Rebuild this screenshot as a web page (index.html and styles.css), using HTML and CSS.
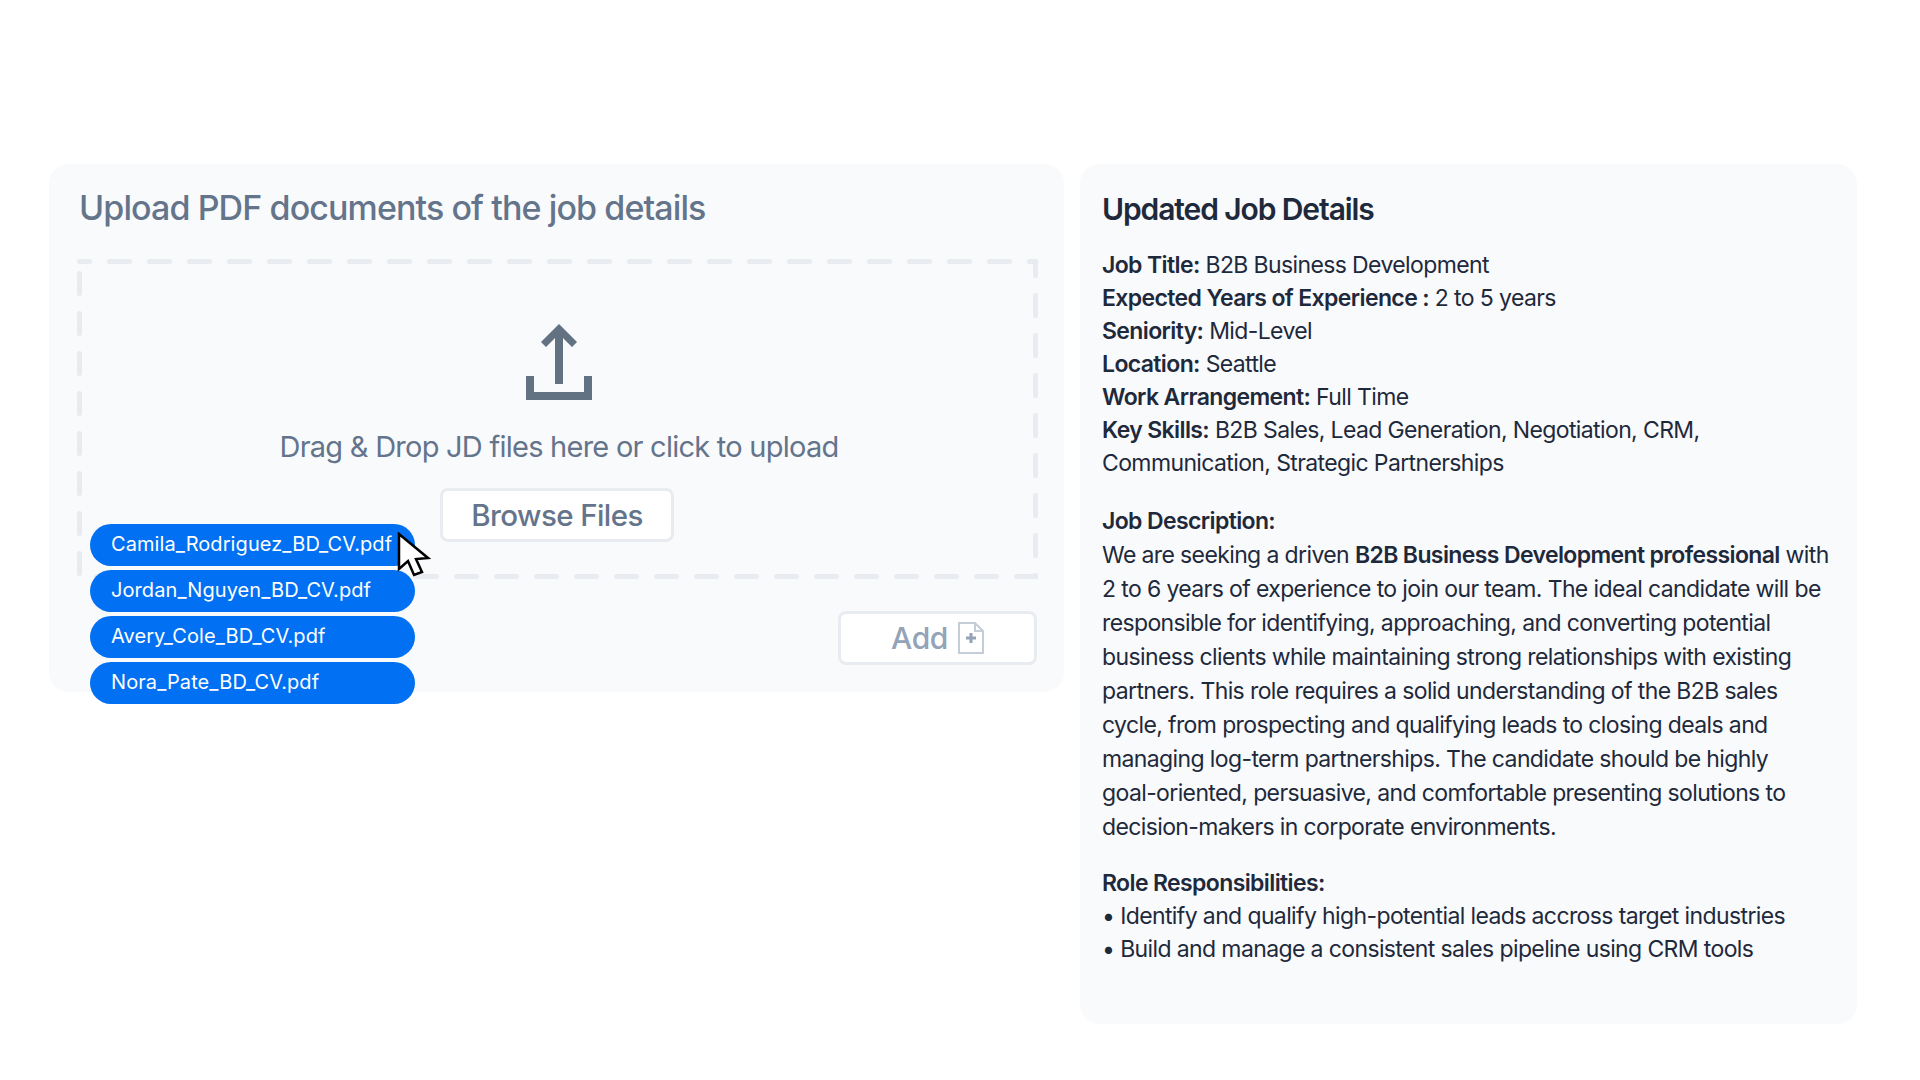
FILE: index.html
```html
<!DOCTYPE html>
<html lang="en">
<head>
    <meta charset="UTF-8">
    <title>Upload job details</title>
    <link rel="stylesheet" href="styles.css">
</head>
<body>
    <main class="layout">
        <section class="upload-panel">
            <h2 class="upload-title">Upload PDF documents of the job details</h2>

            <div class="dropzone">
                <svg class="dropzone-border" width="100%" height="100%">
                    <rect x="2.5" y="2.5" width="956" height="315" />
                </svg>
                <svg class="upload-icon" width="66" height="76" viewBox="0 0 66 76">
                    <path d="M33 0 L51 18 L46 23 L37 14 V60 H29 V14 L20 23 L15 18 Z" />
                    <path d="M0 52 H8 V68 H58 V52 H66 V76 H0 Z" />
                </svg>
                <p class="drop-text">Drag &amp; Drop JD files here or click to upload</p>
                <button class="btn btn-browse">Browse Files</button>
            </div>

            <div class="add-row">
                <button class="btn btn-add">
                    Add
                    <svg width="26" height="32" viewBox="0 0 26 32">
                        <path class="file-outline" d="M1 1 H17 L25 9 V31 H1 Z M17 1 V9 H25" />
                        <path class="file-plus" d="M13 11 V21 M8 16 H18" />
                    </svg>
                </button>
            </div>

            <ul class="file-list">
                <li class="file-chip">Camila_Rodriguez_BD_CV.pdf</li>
                <li class="file-chip">Jordan_Nguyen_BD_CV.pdf</li>
                <li class="file-chip">Avery_Cole_BD_CV.pdf</li>
                <li class="file-chip">Nora_Pate_BD_CV.pdf</li>
            </ul>

            <svg class="cursor" width="34" height="46" viewBox="0 0 34 46">
                <path d="M2 2 V37 L11 29 L17 43 L25 40 L19 27 L31 26 Z" />
            </svg>
        </section>

        <section class="details-panel">
            <h2 class="details-title">Updated Job Details</h2>

            <div class="details-block summary">
                <div><b>Job Title:</b> B2B Business Development</div>
                <div><b>Expected Years of Experience :</b> 2 to 5 years</div>
                <div><b>Seniority:</b> Mid-Level</div>
                <div><b>Location:</b> Seattle</div>
                <div><b>Work Arrangement:</b> Full Time</div>
                <div><b>Key Skills:</b> B2B Sales, Lead Generation, Negotiation, CRM,<br>Communication, Strategic Partnerships</div>
            </div>

            <div class="details-block description">
                <div class="block-label"><b>Job Description:</b></div>
                We are seeking a driven <b>B2B Business Development professional</b> with<br>
                2 to 6 years of experience to join our team. The ideal candidate will be<br>
                responsible for identifying, approaching, and converting potential<br>
                business clients while maintaining strong relationships with existing<br>
                partners. This role requires a solid understanding of the B2B sales<br>
                cycle, from prospecting and qualifying leads to closing deals and<br>
                managing log-term partnerships. The candidate should be highly<br>
                goal-oriented, persuasive, and comfortable presenting solutions to<br>
                decision-makers in corporate environments.
            </div>

            <div class="details-block">
                <div><b>Role Responsibilities:</b></div>
                <div>• Identify and qualify high-potential leads accross target industries</div>
                <div>• Build and manage a consistent sales pipeline using CRM tools</div>
            </div>
        </section>
    </main>
</body>
</html>
```

FILE: styles.css
```css
:root {
    --panel-bg: #f9fafc;
    --slate: #64748b;
    --slate-light: #94a3b8;
    --ink: #1e293b;
    --line: #e8ebef;
    --chip: #0170f3;
}

* { box-sizing: border-box; }

body {
    margin: 0;
    background: #fff;
    font-family: 'Inter', 'Open Sans', sans-serif;
    overflow: hidden;
}

.layout {
    display: flex;
    align-items: flex-start;
    gap: 16px;
    padding: 164px 0 0 49px;
}

/* left panel */
.upload-panel {
    position: relative;
    width: 1015px;
    height: 528px;
    padding: 22px 28px 0;
    background: var(--panel-bg);
    border-radius: 20px;
}

.upload-title {
    margin: 0 0 29px 2px;
    font-size: 34px;
    line-height: 44px;
    font-weight: 500;
    letter-spacing: -0.9px;
    color: var(--slate);
}

.dropzone {
    position: relative;
    width: 961px;
    height: 320px;
    padding-top: 65px;
    display: flex;
    flex-direction: column;
    align-items: center;
}

.dropzone-border {
    position: absolute;
    top: 0;
    left: 0;
}

.dropzone-border rect {
    fill: none;
    stroke: var(--line);
    stroke-width: 5;
    stroke-dasharray: 20 20;
    stroke-dashoffset: 10;
    stroke-linecap: round;
}

.upload-icon { fill: #637282; margin-left: 3px; }

.drop-text {
    margin: 27px 0 0 3px;
    font-size: 29px;
    line-height: 40px;
    letter-spacing: -0.75px;
    color: var(--slate);
}

.btn {
    background: #fff;
    border: 3px solid var(--line);
    border-radius: 8px;
    font-family: inherit;
    font-size: 30px;
    font-weight: 500;
    letter-spacing: -0.4px;
}

.btn-browse {
    width: 234px;
    height: 54px;
    margin: 21px 0 0 -1px;
    color: var(--slate);
    font-size: 29.5px;
    letter-spacing: -0.6px;
}

.add-row {
    display: flex;
    justify-content: flex-end;
    width: 960px;
    margin-top: 32px;
}

.btn-add {
    width: 199px;
    height: 54px;
    display: flex;
    align-items: center;
    justify-content: center;
    gap: 10px;
    color: var(--slate-light);
}

.file-outline { fill: none; stroke: #c5cdd8; stroke-width: 2; }
.file-plus { fill: none; stroke: var(--slate-light); stroke-width: 3; }

/* uploaded files sit over the dropzone */
.file-list {
    position: absolute;
    top: 360px;
    left: 41px;
    width: 325px;
    margin: 0;
    padding: 0;
    list-style: none;
    display: flex;
    flex-direction: column;
    gap: 4px;
}

.file-chip {
    height: 42px;
    padding-left: 21px;
    border-radius: 21px;
    background: var(--chip);
    color: #fff;
    font-size: 20px;
    line-height: 41px;
    letter-spacing: 0.08px;
}

.cursor {
    position: absolute;
    top: 368px;
    left: 348px;
}

.cursor path {
    fill: #fff;
    stroke: #000;
    stroke-width: 2.5;
}

/* right panel */
.details-panel {
    width: 777px;
    height: 860px;
    padding: 23px 22px 0;
    background: var(--panel-bg);
    border-radius: 20px;
    color: var(--ink);
    font-size: 23px;
    line-height: 33px;
    letter-spacing: -0.62px;
}

.details-title {
    margin: 0 0 18px;
    font-size: 30px;
    line-height: 44px;
    font-weight: 600;
    letter-spacing: -1.1px;
}

.details-block { margin-bottom: 24px; }
.details-block b { font-weight: 600; }

.summary { margin-bottom: 25px; }
.description { line-height: 34px; margin-bottom: 23px; }
.block-label { line-height: 33px; }
```
